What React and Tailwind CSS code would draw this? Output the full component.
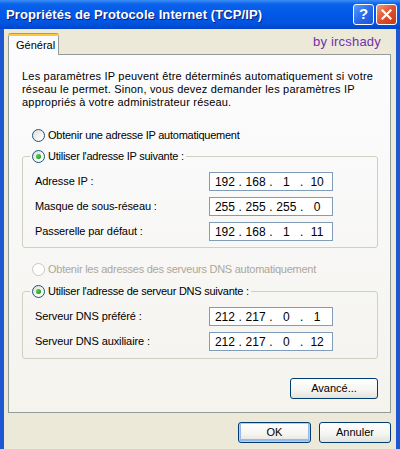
import React from "react";

/* ------------------------------------------------------------------ */
/*  @ Small XP-style pieces
/* ------------------------------------------------------------------ */
const Radio = ({ checked, disabled, label }) => {
  return (
    <span className="flex items-center h-[13px]">
      <span
        className={`relative flex items-center justify-center w-[13px] h-[13px] rounded-full border ${
          disabled
            ? "border-[#CAC8BB] bg-white"
            : "border-[#1C5180] bg-[linear-gradient(135deg,#DCDCD7_0%,#F6F6F4_60%,#FFFFFF_100%)]"
        }`}
      >
        {checked && (
          <span className="w-[5px] h-[5px] rounded-full bg-[radial-gradient(circle_at_35%_35%,#55D551_0%,#21A121_70%,#1A8A1A_100%)]" />
        )}
      </span>
      <span
        className={`ml-[3px] leading-[13px] tracking-[-0.25px] ${
          disabled ? "text-[#ACA899]" : "text-black"
        }`}
      >
        {label}
      </span>
    </span>
  );
};

const IpBox = ({ parts }) => {
  return (
    <div className="flex items-center w-[124px] h-[19px] border border-[#7F9DB9] bg-white px-[3px] text-[12px]">
      {parts.map((p, i) => (
        <React.Fragment key={i}>
          {i > 0 && <span className="w-[7px] text-center">.</span>}
          <span className="w-[24px] text-center">{p}</span>
        </React.Fragment>
      ))}
    </div>
  );
};

const Row = ({ label, parts }) => {
  return (
    <div className="flex items-center h-[19px] pl-[5px]">
      <span className="w-[174px] tracking-[-0.1px]">{label}</span>
      <IpBox parts={parts} />
    </div>
  );
};

const XpButton = ({ children, def, width }) => {
  return (
    <button
      className={`${width} h-[21px] rounded-[3px] border border-[#003C74] bg-[linear-gradient(to_bottom,#FFFFFF_0%,#F4F4F0_60%,#E3E2DA_100%)] text-[11px] text-black flex items-center justify-center ${
        def ? "shadow-[inset_0_0_0_1px_#B3CFF3,inset_0_-1px_0_2px_#98B8EA]" : ""
      }`}
    >
      {children}
    </button>
  );
};

/* ------------------------------------------------------------------ */
/*  @ Dialog
/* ------------------------------------------------------------------ */
export default function App() {
  return (
    <div className="w-[400px] h-[449px] flex flex-col overflow-hidden [font-family:'Liberation_Sans',Arial,sans-serif] text-[11px] text-black">
      {/* title bar */}
      <div className="h-[29px] flex items-center pl-[6px] pr-[3px] bg-[linear-gradient(to_bottom,#3D8EF6_0%,#0A62EA_14%,#0058E6_50%,#0054E0_80%,#0046C9_100%)]">
        <span className="flex-1 text-white font-bold text-[13px] tracking-[0.1px] [text-shadow:1px_1px_0_#0A1E7A]">
          Propriétés de Protocole Internet (TCP/IP)
        </span>
        <span className="w-[21px] h-[21px] rounded-[3px] border border-white flex items-center justify-center bg-[linear-gradient(135deg,#5D9BFC_0%,#2A6BEA_50%,#1A55D8_100%)] text-white font-bold text-[15px]">
          ?
        </span>
        <span className="ml-[2px] w-[21px] h-[21px] rounded-[3px] border border-white flex items-center justify-center bg-[linear-gradient(135deg,#F09B7C_0%,#E0502E_50%,#C43A18_100%)]">
          <svg width="11" height="11" viewBox="0 0 11 11">
            <path d="M1.5 1.5 L9.5 9.5 M9.5 1.5 L1.5 9.5" stroke="white" strokeWidth="2.2" strokeLinecap="square" />
          </svg>
        </span>
      </div>

      {/* body */}
      <div className="flex-1 flex flex-col bg-[#ECE9D8] border-x-[4px] border-[#1D58D2] pt-[4px] pl-[4px] pr-[5px]">
        {/* tabs */}
        <div className="flex items-end justify-between h-[21px]">
          <div className="relative z-10 -mb-px w-[51px] h-[22px] rounded-t-[3px] border-x border-[#919B9C] bg-[#FCFCFE] flex flex-col">
            <div className="h-[3px] rounded-t-[3px] bg-[linear-gradient(to_bottom,#E68B2C_0%,#E68B2C_33%,#FFC73C_34%,#FFC73C_100%)] -mx-px" />
            <span className="pl-[7px] pt-[3px] leading-[13px]">Général</span>
          </div>
          <span className="text-[13px] text-[#7030B0] pr-[10px] pb-[3px] tracking-[0.2px]">
            by ircshady
          </span>
        </div>

        {/* tab page */}
        <div className="h-[359px] border border-[#919B9C] bg-[linear-gradient(to_bottom,#FCFCFE_0%,#F4F3EE_100%)] pt-[15px] pl-[13px] pr-[12px] flex flex-col">
          <p className="leading-[13px] tracking-[0.2px]">
            Les paramètres IP peuvent être déterminés automatiquement si votre
            <br />
            réseau le permet. Sinon, vous devez demander les paramètres IP
            <br />
            appropriés à votre administrateur réseau.
          </p>

          <div className="mt-[20px] pl-[10px]">
            <Radio label="Obtenir une adresse IP automatiquement" />
          </div>

          <fieldset className="mt-[8px] border border-[#D0D0BF] rounded-[3px] px-[7px] pb-[6px]">
            <legend className="px-[2px]">
              <Radio checked label="Utiliser l'adresse IP suivante :" />
            </legend>
            <div className="flex flex-col gap-[6px] mt-[9px]">
              <Row label="Adresse IP :" parts={["192", "168", "1", "10"]} />
              <Row label="Masque de sous-réseau :" parts={["255", "255", "255", "0"]} />
              <Row label="Passerelle par défaut :" parts={["192", "168", "1", "11"]} />
            </div>
          </fieldset>

          <div className="mt-[15px] pl-[10px]">
            <Radio disabled label="Obtenir les adresses des serveurs DNS automatiquement" />
          </div>

          <fieldset className="mt-[9px] border border-[#D0D0BF] rounded-[3px] px-[7px] pb-[7px]">
            <legend className="px-[2px]">
              <Radio checked label="Utiliser l'adresse de serveur DNS suivante :" />
            </legend>
            <div className="flex flex-col gap-[6px] mt-[9px]">
              <Row label="Serveur DNS préféré :" parts={["212", "217", "0", "1"]} />
              <Row label="Serveur DNS auxiliaire :" parts={["212", "217", "0", "12"]} />
            </div>
          </fieldset>

          <div className="mt-[19px] flex justify-end">
            <XpButton width="w-[88px]">Avancé...</XpButton>
          </div>
        </div>

        {/* buttons */}
        <div className="mt-[9px] flex justify-end gap-[8px]">
          <XpButton def width="w-[73px]">OK</XpButton>
          <XpButton width="w-[72px]">Annuler</XpButton>
        </div>
      </div>
    </div>
  );
}
